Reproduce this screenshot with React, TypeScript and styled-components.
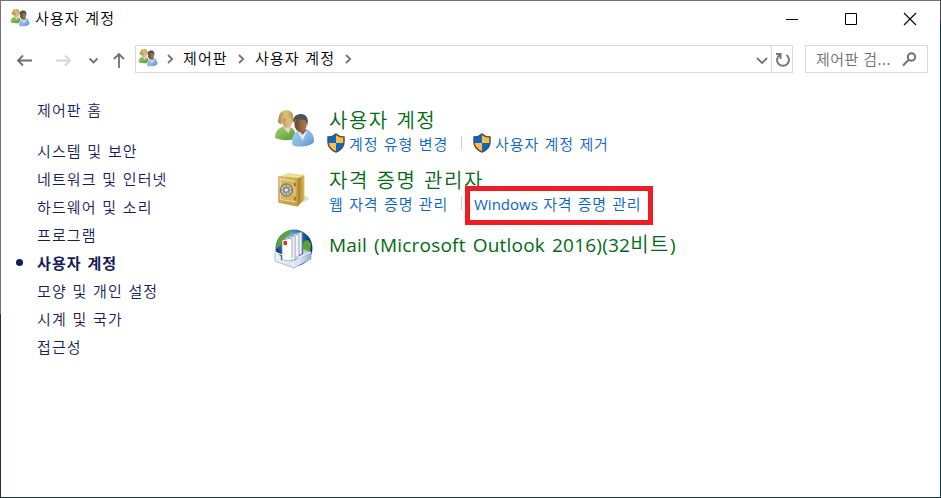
import React from "react";
import styled, { createGlobalStyle, css } from "styled-components";

const GlobalStyle = createGlobalStyle`
  *, *::after { box-sizing: border-box; }
  body { margin: 0; background: #fff; }
  button, a { font: inherit; letter-spacing: inherit; color: inherit; }
`;

const korean = `"Noto Sans CJK KR", "Open Sans", sans-serif`;

const Frame = styled.div`
  width: 941px;
  height: 498px;
  padding: 1px;
  background:
    linear-gradient(90deg, #706f72, #706f72) 0 0 / 940px 1px no-repeat,
    linear-gradient(#747377 314px, #18353c 314px) 0 0 / 1px 100% no-repeat,
    linear-gradient(#4b4a4e 20px, #0c3b42 20px) 100% 0 / 1px 100% no-repeat,
    #18353c;
`;

const Window = styled.div`
  width: 939px;
  height: 496px;
  background: #fff;
  display: flex;
  flex-direction: column;
  font-family: ${korean};
  font-size: 15px;
  font-weight: 350;
  letter-spacing: 0.9px;
  word-spacing: 1.2px;
  line-height: 20px;
  white-space: nowrap;
`;

const TitleBar = styled.header`
  height: 44px;
  display: flex;
  align-items: flex-start;
  padding: 7px 23px 0 9px;
`;

const Title = styled.h1`
  margin: 0 0 0 5px;
  font: inherit;
  letter-spacing: 1.1px;
  color: #000;
  flex: 1;
`;

const WindowButtons = styled.div`
  display: flex;
  gap: 45px;
  padding-top: 4px;
`;

const IconButton = styled.button`
  border: 0;
  padding: 0;
  background: none;
  display: flex;
  width: 14px;
`;

const NavBar = styled.nav`
  height: 28px;
  display: flex;
  padding: 0 12px 0 15px;
`;

const NavIcons = styled.div`
  width: 119px;
  display: flex;
  align-items: center;
  padding-top: 3px;
`;

const AddressBox = styled.div`
  width: 658px;
  border: 1px solid #d9d9d9;
  display: flex;
  color: #000;
`;

const Crumbs = styled.div`
  flex: 1;
  display: flex;
  padding: 2px 0 0 2px;
`;

const Crumb = styled.span<{ $width: number }>`
  width: ${(p) => p.$width}px;
  letter-spacing: 1.1px;
`;

const CrumbArrow = styled.span<{ $before: number; $after?: number }>`
  display: flex;
  padding-top: 6px;
  margin: 0 ${(p) => p.$after ?? 0}px 0 ${(p) => p.$before}px;
`;

const DropArrow = styled.div`
  width: 18px;
  padding: 11px 0 0 3px;
  display: flex;
`;

const Refresh = styled.div`
  width: 21px;
  border-left: 1px solid #d9d9d9;
  padding: 5px 0 0 3px;
  display: flex;
`;

const SearchBox = styled.div`
  margin-left: 12px;
  width: 123px;
  border: 1px solid #d9d9d9;
  display: flex;
  padding: 3px 0 0 10px;
  color: #6d6d6d;
`;

const SearchText = styled.span`
  width: 86px;
  letter-spacing: 0.5px;
  word-spacing: 0.5px;
`;

const SearchIconSlot = styled.span`
  padding-top: 2px;
  display: flex;
`;

const Body = styled.div`
  flex: 1;
  display: flex;
`;

const Sidebar = styled.aside`
  width: 273px;
  padding: 27px 0 0 15px;
  color: #151c5a;
  letter-spacing: 1.1px;
`;

const SideItem = styled.div<{ $home?: boolean; $active?: boolean }>`
  height: 28px;
  margin-bottom: ${(p) => (p.$home ? 13 : 0)}px;
  display: flex;
  font-weight: ${(p) => (p.$active ? 700 : 350)};
`;

const Marker = styled.span<{ $on?: boolean }>`
  width: 7px;
  height: 7px;
  border-radius: 50%;
  margin: 6px 14px 0 0;
  background: ${(p) => (p.$on ? "#151c5a" : "transparent")};
`;

const Content = styled.main`
  padding-top: 34px;
  flex: 1;
`;

const Category = styled.section<{ $height: number }>`
  height: ${(p) => p.$height}px;
  display: flex;
`;

const CategoryIcon = styled.div<{ $top?: number }>`
  width: 55px;
  flex: none;
  padding-top: ${(p) => p.$top ?? 0}px;
`;

const GlobeSlot = styled(CategoryIcon)`
  margin-top: -2px;
`;

const Heading = styled.h2`
  margin: 0;
  font-size: 20px;
  font-weight: 350;
  line-height: 25px;
  letter-spacing: 1.5px;
  word-spacing: 1.8px;
  color: #006b12;
`;

const Latin = styled.span<{ $size: number; $spacing: number }>`
  font-family: "Open Sans", "Noto Sans", sans-serif;
  font-weight: 400;
  font-size: ${(p) => p.$size}px;
  letter-spacing: ${(p) => p.$spacing}px;
`;

const Links = styled.div`
  display: flex;
  margin-top: 2px;
  height: 20px;
  color: #0664ca;
`;

const TaskLink = styled.a<{ $width?: number }>`
  display: flex;
  ${(p) => p.$width && css`width: ${p.$width}px;`}
`;

const ShieldSlot = styled.span`
  display: flex;
  margin: -1px 3px 0 -3px;
`;

const Divider = styled.span<{ $after: number }>`
  width: 1px;
  height: 14px;
  margin: 2px ${(p) => p.$after}px 0 0;
  background: #cfcfcf;
`;

const Highlighted = styled.span`
  position: relative;
  letter-spacing: 0.8px;
  &::after {
    content: "";
    position: absolute;
    left: -9px;
    top: -8px;
    width: 188px;
    height: 39px;
    border: 5px solid #ee1c25;
  }
`;

const Chevron = ({ down = false, color = "#757575" }: { down?: boolean; color?: string }) => (
  <svg width={down ? 12 : 7} height={down ? 8 : 10} viewBox={down ? "0 0 12 8" : "0 0 7 10"} fill="none" stroke={color} strokeWidth="1.8">
    <path d={down ? "M1 1l5 5 5-5" : "M1 1l4.2 4L1 9"} />
  </svg>
);

const People = ({ size }: { size: number }) => (
  <svg width={size} height={size} viewBox="0 0 40 40">
    <defs>
      <linearGradient id="green" x1="0" x2="1" y2="1"><stop stopColor="#a8c48a" /><stop offset=".5" stopColor="#7eb84f" /><stop offset="1" stopColor="#5b9438" /></linearGradient>
      <linearGradient id="blue" x1="0" x2="1" y2="1"><stop stopColor="#a9d1f0" /><stop offset=".6" stopColor="#84b3e0" /><stop offset="1" stopColor="#5289c1" /></linearGradient>
      <linearGradient id="hair" x1="0" x2="1"><stop stopColor="#a88c43" /><stop offset=".5" stopColor="#dcc67c" /><stop offset="1" stopColor="#b4984c" /></linearGradient>
      <linearGradient id="face" x1="0" x2="1"><stop stopColor="#b98a55" /><stop offset=".5" stopColor="#e0b680" /><stop offset="1" stopColor="#e3bd88" /></linearGradient>
      <linearGradient id="skin" x1="0" x2="1"><stop stopColor="#5f4030" /><stop offset=".6" stopColor="#9a6a45" /><stop offset="1" stopColor="#a87a50" /></linearGradient>
    </defs>
    <path d="M1 28c0-6 3-9 8-11l7 1c4 1 5 5 5 11-5 2-16 2-20-1z" fill="url(#green)" />
    <path d="M9 18l5 6 3-7z" fill="#e8d9b4" />
    <ellipse cx="13" cy="11" rx="5" ry="7.500" fill="url(#face)" />
    <path d="M4.500 14C3 12 5 8 5 6c2-5 8-6 12-3 2.500 2 2 8 0 12 0-3 0-5-1-7-3 1-6 1-8 0l0 7z" fill="url(#hair)" />
    <path d="M18 35c-1-8 1-12 7-14l7-1c5 2 7 6 7 12-3 5-17 6-21 3z" fill="url(#blue)" />
    <path d="M23 22l5 9 4-9z" fill="#dfe9ef" />
    <path d="M23 20l5 5 4-5z" fill="#855839" />
    <ellipse cx="26" cy="15" rx="6" ry="7.500" fill="url(#skin)" />
    <path d="M19.500 14c-2-4 0-8 5-9 6-1 10 3 8 11l-2-5c-3-1-6-1-9-1z" fill="#4b525a" />
  </svg>
);

const Safe = () => (
  <svg width="38" height="38" viewBox="0 0 40 40">
    <defs>
      <linearGradient id="gold" x1="0" x2="1" y2="1"><stop stopColor="#ead486" /><stop offset=".5" stopColor="#cda94e" /><stop offset="1" stopColor="#c5a049" /></linearGradient>
      <linearGradient id="side" x1="0" x2="1"><stop stopColor="#a77b20" /><stop offset="1" stopColor="#ddb95d" /></linearGradient>
    </defs>
    <path d="M29 34l9-5-7-4z" fill="#dedede" />
    <path d="M5 6l10-4 17 2-7 4z" fill="#f1dd9b" />
    <path d="M25 8l7-4v26l-7 7z" fill="url(#side)" />
    <path d="M5 6l20 2v29L5 33z" fill="url(#gold)" stroke="#ad8737" strokeWidth=".7" />
    <path d="M7 9l15 1.500v22L7 30z" fill="#d5b65d" stroke="#f5e3a4" strokeWidth=".8" />
    <circle cx="13" cy="20" r="6.500" fill="#aaa89c" stroke="#716d61" />
    <circle cx="13" cy="20" r="4.700" fill="none" stroke="#e4e3dc" />
    <path d="M13 14v12M7 20h12M9 16l8 8M9 24l8-8" stroke="#65635d" strokeWidth=".8" />
    <circle cx="13" cy="20" r="1.700" fill="#f0f0ed" />
    <path d="M22 12v4M22 27v4" stroke="#80601e" strokeWidth="1.500" />
  </svg>
);

const MailGlobe = () => (
  <svg width="40" height="40" viewBox="0 0 40 40">
    <defs>
      <radialGradient id="globe" cx=".4" cy=".25"><stop stopColor="#a6dbf2" /><stop offset=".45" stopColor="#4289bd" /><stop offset="1" stopColor="#123b78" /></radialGradient>
      <linearGradient id="tray" x1="0" x2="1"><stop stopColor="#edf3fb" /><stop offset=".7" stopColor="#d4e0f2" /><stop offset="1" stopColor="#9aacd0" /></linearGradient>
    </defs>
    <circle cx="20" cy="19" r="18.500" fill="url(#globe)" />
    <path d="M5 9c5-7 9-7 13-8l-3 5-5 3-2 6-6 5c0-5 1-8 3-11zM30 12l4-1 3 4-1 7-5 2-3-6z" fill="#58a532" />
    <path d="M19 5l9-2v22l-9 4z" fill="#eff3fa" stroke="#7586a8" strokeWidth=".7" />
    <path d="M15 7l10-2v22l-10 4z" fill="#f1f5fb" stroke="#7586a8" strokeWidth=".7" />
    <path d="M11 9l10-2v23l-10 3z" fill="#f5f8fc" stroke="#7586a8" strokeWidth=".7" />
    <path d="M8 11l10-2v23l-10 2z" fill="#fff" stroke="#7586a8" strokeWidth=".7" />
    <path d="M9.500 12h3.500v4H9.500z" fill="#f02c16" />
    <path d="M1 22l6 5v4l12 1 10-7v-5l8 3v7l-17 9-19-7z" fill="url(#tray)" stroke="#8194b6" strokeWidth=".6" />
    <path d="M1 23l18 7 18-7M19 30v8" fill="none" stroke="#fff" />
  </svg>
);

const Shield = () => (
  <svg width="20" height="20" viewBox="0 0 20 20">
    <path d="M10 1C8 3 5 4 2 4v5c0 5 3 8 8 10 5-2 8-5 8-10V4c-3 0-6-1-8-3z" fill="#ffbd38" />
    <path d="M10 1v9H2V4c3 0 6-1 8-3zM10 10h8c-.5 5-3 7.500-8 9z" fill="#0868cb" />
    <path d="M10 1C8 3 5 4 2 4v5c0 5 3 8 8 10 5-2 8-5 8-10V4c-3 0-6-1-8-3z" fill="none" stroke="#4b5056" strokeWidth="1.500" />
  </svg>
);

const sidebarItems = ["시스템 및 보안", "네트워크 및 인터넷", "하드웨어 및 소리", "프로그램", "사용자 계정", "모양 및 개인 설정", "시계 및 국가", "접근성"];

export default function App() {
  return (
    <>
      <GlobalStyle />
      <Frame>
        <Window>
          <TitleBar>
            <People size={20} />
            <Title>사용자 계정</Title>
            <WindowButtons>
              <IconButton aria-label="최소화"><svg width="14" height="14"><path d="M1 7.500h12" stroke="#000" /></svg></IconButton>
              <IconButton aria-label="최대화"><svg width="14" height="14"><path d="M1.500 1.500h11v11h-11z" fill="none" stroke="#000" /></svg></IconButton>
              <IconButton aria-label="닫기"><svg width="14" height="14"><path d="M1 1l12 12M13 1L1 13" stroke="#000" strokeWidth="1.100" /></svg></IconButton>
            </WindowButtons>
          </TitleBar>
          <NavBar>
            <NavIcons>
              <svg width="118" height="20" fill="none" stroke="#707070" strokeWidth="1.800">
                <path d="M16 9.500H2M7 4.500l-5 5 5 5" />
                <path d="M40 9.500h14M49 4.500l5 5-5 5" stroke="#d5d5d5" />
                <path d="M73.500 7.500l4 4 4-4" />
                <path d="M103 17V3M98 8l5-5 5 5" />
              </svg>
            </NavIcons>
            <AddressBox>
              <Crumbs>
                <People size={20} />
                <CrumbArrow $before={9} $after={9}><Chevron /></CrumbArrow>
                <Crumb $width={47}>제어판</Crumb>
                <CrumbArrow $before={8} $after={10}><Chevron /></CrumbArrow>
                <Crumb $width={81}>사용자 계정</Crumb>
                <CrumbArrow $before={9}><Chevron /></CrumbArrow>
              </Crumbs>
              <DropArrow><Chevron down /></DropArrow>
              <Refresh>
                <svg width="16" height="17" fill="none" stroke="#777" strokeWidth="2"><path d="M4.500 4A6 6 0 1 0 11.500 4M1 3h4.500v5" /></svg>
              </Refresh>
            </AddressBox>
            <SearchBox>
              <SearchText>제어판 검...</SearchText>
              <SearchIconSlot>
                <svg width="15" height="17" fill="none" stroke="#707070" strokeWidth="2"><circle cx="9.500" cy="6" r="3.700" /><path d="M7 8.500l-6 6" /></svg>
              </SearchIconSlot>
            </SearchBox>
          </NavBar>
          <Body>
            <Sidebar>
              <SideItem $home><Marker />제어판 홈</SideItem>
              {sidebarItems.map((item, index) => (
                <SideItem key={item} $active={index === 4}><Marker $on={index === 4} />{item}</SideItem>
              ))}
            </Sidebar>
            <Content>
              <Category $height={60}>
                <CategoryIcon $top={2}><People size={41} /></CategoryIcon>
                <div>
                  <Heading>사용자 계정</Heading>
                  <Links>
                    <TaskLink $width={132}><ShieldSlot><Shield /></ShieldSlot>계정 유형 변경</TaskLink>
                    <Divider $after={13} />
                    <TaskLink><ShieldSlot><Shield /></ShieldSlot>사용자 계정 제거</TaskLink>
                  </Links>
                </div>
              </Category>
              <Category $height={64}>
                <CategoryIcon $top={4}><Safe /></CategoryIcon>
                <div>
                  <Heading>자격 증명 관리자</Heading>
                  <Links>
                    <TaskLink $width={132}>웹 자격 증명 관리</TaskLink>
                    <Divider $after={12} />
                    <TaskLink><Highlighted><Latin $size={15} $spacing={0}>Windows</Latin> 자격 증명 관리</Highlighted></TaskLink>
                  </Links>
                </div>
              </Category>
              <Category $height={60}>
                <GlobeSlot><MailGlobe /></GlobeSlot>
                <Heading><Latin $size={19} $spacing={0.22}>Mail (Microsoft Outlook 2016)(32</Latin>비트<Latin $size={19} $spacing={0}>)</Latin></Heading>
              </Category>
            </Content>
          </Body>
        </Window>
      </Frame>
    </>
  );
}
